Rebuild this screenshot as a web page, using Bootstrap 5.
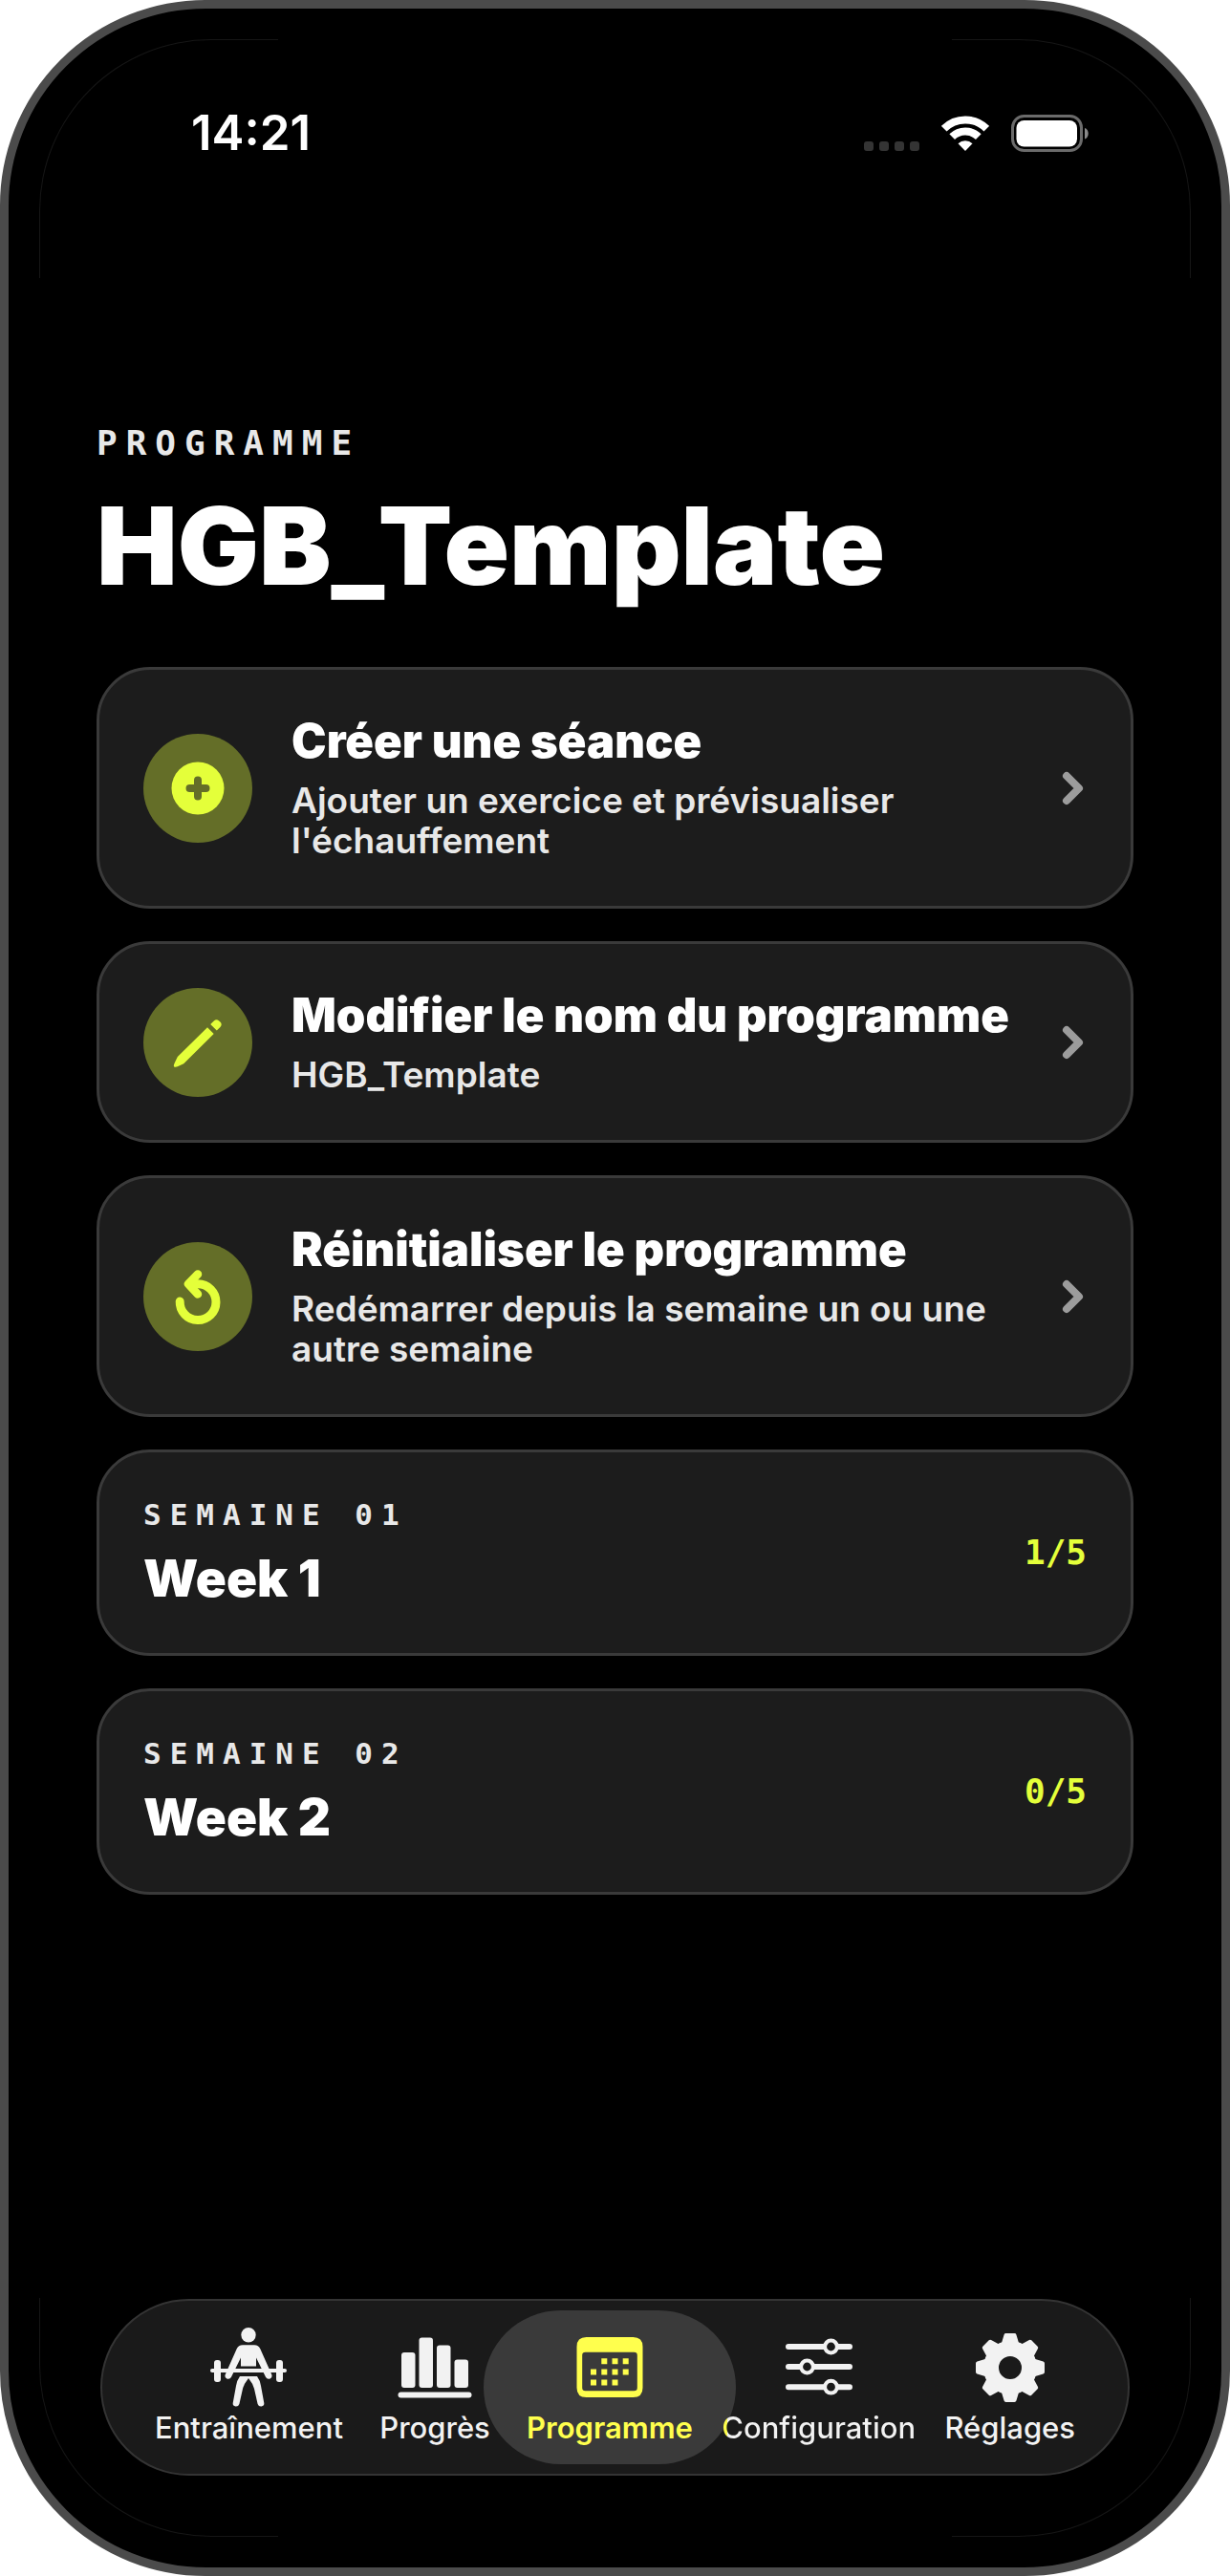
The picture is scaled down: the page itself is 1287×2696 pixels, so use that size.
<!DOCTYPE html>
<html lang="fr">
<head>
<meta charset="utf-8">
<meta name="viewport" content="width=device-width, initial-scale=1">
<title>Programme</title>
<link href="https://cdn.jsdelivr.net/npm/bootstrap@5.3.0/dist/css/bootstrap.min.css" rel="stylesheet">
<style>
  body { background: #fff; font-family: Inter, "Liberation Sans", sans-serif; }
  .device { min-height: 100vh; background: #000; color: #fff; border: 9px solid #4b4b4b; border-radius: 215px; padding: 100px 92px 96px; }
  .corner { position: absolute; width: 250px; height: 250px; border: 0 solid #161616; pointer-events: none; }
  .corner-tl { top: 32px; left: 32px; border-width: 1px 0 0 1px; border-top-left-radius: 180px; }
  .corner-tr { top: 32px; right: 32px; border-width: 1px 1px 0 0; border-top-right-radius: 180px; }
  .corner-bl { bottom: 32px; left: 32px; border-width: 0 0 1px 1px; border-bottom-left-radius: 180px; }
  .corner-br { bottom: 32px; right: 32px; border-width: 0 1px 1px 0; border-bottom-right-radius: 180px; }

  .status { padding: 0 46px 0 99px; margin-bottom: 274px; }
  .clock { font-size: 51px; line-height: 60px; font-weight: 600; }
  .status-icons { gap: 23px; padding-top: 11px; }

  .eyebrow { font-family: "DejaVu Sans Mono", monospace; font-weight: 700; letter-spacing: 9px; color: #e8e8e8; }
  .eyebrow-lg { font-size: 36px; line-height: 42px; }
  .eyebrow-sm { font-size: 31px; line-height: 36px; }
  .page-title { font-size: 113px; line-height: 136px; font-weight: 900; margin: 18px 0 59px; }

  .stack { gap: 34px; }
  .tile { background: #1c1c1c; border: 3px solid #3a3a3a; border-radius: 56px; padding: 45px 46px; color: #fff; }
  .tile-body { padding: 2px 0; }
  .tile-text { gap: 13px; margin-left: 41px; margin-right: 20px; }
  .tile-title { font-size: 49px; line-height: 56px; font-weight: 900; }
  .tile-sub { font-size: 37px; line-height: 42px; font-weight: 600; color: #e8e8e8; }
  .week-title { font-size: 53px; line-height: 62px; font-weight: 900; margin-top: 18px; }
  .count { font-family: "DejaVu Sans Mono", monospace; font-weight: 700; font-size: 36px; line-height: 42px; color: #e4ff3a; }

  .tabs { background: #1a1a1a; border: 2px solid #343434; border-radius: 96px; padding: 26px 55px 29px; margin: 0 4px; }
  .tab { color: #f2f2f2; font-size: 31px; line-height: 38px; font-weight: 500; }
  .tab-on { color: #ffff4d; font-weight: 600; }
  .tab-on::before { content: ""; position: absolute; inset: -16px -45px -19px; border-radius: 81px; background: #3a3a3a; }
  .tab > * { position: relative; z-index: 1; }
  .tab-tint { background: linear-gradient(90deg, #ffff4d 6px, #f2f2f2 6px); -webkit-background-clip: text; background-clip: text; color: transparent; }
</style>
</head>
<body>
<div class="device position-relative d-flex flex-column">
  <span class="corner corner-tl"></span><span class="corner corner-tr"></span>
  <span class="corner corner-bl"></span><span class="corner corner-br"></span>

  <div class="status d-flex justify-content-between align-items-start">
    <div class="clock">14:21</div>
    <div class="status-icons d-flex align-items-center">
      <svg width="58" height="40" viewBox="0 0 58 40" fill="#343434" aria-hidden="true"><rect y="28" width="10" height="10" rx="3"/><rect x="16" y="28" width="10" height="10" rx="3"/><rect x="32" y="28" width="10" height="10" rx="3"/><rect x="48" y="28" width="10" height="10" rx="3"/></svg>
      <svg width="50" height="40" viewBox="0 0 50 40" fill="none" stroke="#fff" stroke-width="8" aria-hidden="true"><path d="M2.7 14.7A31.500 31.500 0 0 1 47.300 14.700M11.200 23.200A19.500 19.500 0 0 1 38.800 23.200"/><path d="M25 38l-7.500-7.800a10.800 10.800 0 0 1 15 0z" fill="#fff" stroke="none"/></svg>
      <svg width="82" height="40" viewBox="0 0 82 40" aria-hidden="true"><rect x="1.500" y="1.500" width="72" height="36" rx="12" fill="none" stroke="#6b6b6b" stroke-width="3"/><rect x="5.500" y="6" width="63.500" height="27.500" rx="8" fill="#fff"/><path d="M77 14c5 1.500 5 10 0 11.500z" fill="#8a8a8a"/></svg>
    </div>
  </div>

  <main>
    <div class="eyebrow eyebrow-lg">PROGRAMME</div>
    <h1 class="page-title">HGB_Template</h1>

    <div class="stack d-flex flex-column">
      <button type="button" class="tile d-flex align-items-center text-start w-100">
        <svg class="flex-shrink-0" width="114" height="114" viewBox="-57 -57 114 114" aria-hidden="true"><circle r="57" fill="#646e28"/><circle r="27.500" fill="#e4ff3a"/><path d="M-8.500 0h17M0-8.500v17" stroke="#646e28" stroke-width="8" stroke-linecap="round"/></svg>
        <span class="tile-body tile-text d-flex flex-column flex-grow-1">
          <span class="tile-title">Créer une séance</span>
          <span class="tile-sub">Ajouter un exercice et prévisualiser l'échauffement</span>
        </span>
        <svg class="flex-shrink-0" width="26" height="36" viewBox="0 0 26 36" fill="none" stroke="#9c9c9c" stroke-width="8" stroke-linecap="round" stroke-linejoin="round" aria-hidden="true"><path d="M5 5l13 13L5 31"/></svg>
      </button>

      <button type="button" class="tile d-flex align-items-center text-start w-100">
        <svg class="flex-shrink-0" width="114" height="114" viewBox="-57 -57 114 114" fill="#e4ff3a" aria-hidden="true"><circle r="57" fill="#646e28"/><path d="M10-15.700l6.700 6.700-31.500 31.200-6.500 3-2 .6q-2.500 0-1.700-2.600l.8-2 3-6.200zM13.200-19l3.600-3.600q2.700-2.500 5.400 0l1.200 1.200q2.600 2.700 0 5.400l-3.600 3.600z"/></svg>
        <span class="tile-body tile-text d-flex flex-column flex-grow-1">
          <span class="tile-title">Modifier le nom du programme</span>
          <span class="tile-sub">HGB_Template</span>
        </span>
        <svg class="flex-shrink-0" width="26" height="36" viewBox="0 0 26 36" fill="none" stroke="#9c9c9c" stroke-width="8" stroke-linecap="round" stroke-linejoin="round" aria-hidden="true"><path d="M5 5l13 13L5 31"/></svg>
      </button>

      <button type="button" class="tile d-flex align-items-center text-start w-100">
        <svg class="flex-shrink-0" width="114" height="114" viewBox="-57 -57 114 114" fill="none" stroke="#e4ff3a" stroke-width="9" stroke-linecap="round" stroke-linejoin="round" aria-hidden="true"><circle r="57" fill="#646e28" stroke="none"/><path d="M-18.800 5A18.900 18.900 0 1 0 0-13.200h-6"/><path d="M0-23.500L-10-13.200 0-2.500" stroke-width="8.500"/></svg>
        <span class="tile-body tile-text d-flex flex-column flex-grow-1">
          <span class="tile-title">Réinitialiser le programme</span>
          <span class="tile-sub">Redémarrer depuis la semaine un ou une autre semaine</span>
        </span>
        <svg class="flex-shrink-0" width="26" height="36" viewBox="0 0 26 36" fill="none" stroke="#9c9c9c" stroke-width="8" stroke-linecap="round" stroke-linejoin="round" aria-hidden="true"><path d="M5 5l13 13L5 31"/></svg>
      </button>

      <button type="button" class="tile d-flex align-items-center justify-content-between text-start w-100">
        <span class="tile-body d-flex flex-column">
          <span class="eyebrow eyebrow-sm">SEMAINE 01</span>
          <span class="week-title">Week 1</span>
        </span>
        <span class="count">1/5</span>
      </button>

      <button type="button" class="tile d-flex align-items-center justify-content-between text-start w-100">
        <span class="tile-body d-flex flex-column">
          <span class="eyebrow eyebrow-sm">SEMAINE 02</span>
          <span class="week-title">Week 2</span>
        </span>
        <span class="count">0/5</span>
      </button>
    </div>
  </main>

  <nav class="tabs d-flex justify-content-between mt-auto" aria-label="Navigation principale">
    <a href="#entrainement" class="tab me-2 position-relative d-flex flex-column align-items-center text-decoration-none">
      <svg width="88" height="88" viewBox="0 0 88 88" fill="#f2f2f2" aria-hidden="true"><circle cx="44" cy="9.700" r="7.700"/><path d="M38 20.300h12q4.500 0 6.300 4L68.200 51q1.200 3.200-1.500 4.500-3.200 1.200-4.700-1.800L52 33.500V42.500H36V33.500L26 53.700q-1.500 3-4.700 1.800-2.700-1.300-1.500-4.500L31.700 24.300q1.800-4 6.300-4z"/><rect x="4" y="45" width="80" height="4" rx="2"/><rect x="8" y="36" width="7" height="23" rx="3"/><rect x="73" y="36" width="7" height="23" rx="3"/><path d="M35 53h18q3 4 4 10l3.300 18q.3 3-2.700 3.500-3 .3-4-2.500L50 66q-1.500-5.500-6-11-4.500 5.500-6 11l-3.600 16q-1 2.800-4 2.500-3-.5-2.700-3.500L31 63q1-6 4-10z"/></svg>
      <span>Entraînement</span>
    </a>
    <a href="#progres" class="tab me-2 position-relative d-flex flex-column align-items-center text-decoration-none">
      <svg width="88" height="88" viewBox="0 0 88 88" fill="#f2f2f2" aria-hidden="true"><rect x="9" y="28" width="14.500" height="37" rx="3"/><rect x="27.500" y="12.500" width="14.500" height="52.500" rx="3"/><rect x="46" y="20.500" width="14.500" height="44.500" rx="3"/><rect x="64.500" y="35.500" width="14.500" height="29.500" rx="3"/><rect x="5.500" y="69.500" width="77" height="6" rx="3"/></svg>
      <span>Progrès</span>
    </a>
    <a href="#programme" class="tab tab-on position-relative d-flex flex-column align-items-center text-decoration-none" aria-current="page">
      <svg width="88" height="88" viewBox="0 0 88 88" fill="#ffff4d" aria-hidden="true"><path fill-rule="evenodd" d="M19.500 12h49q10 0 10 10v43q0 10-10 10h-49q-10 0-10-10V22q0-10 10-10zM18.500 27.700q-3.300 0-3.300 3.300v34q0 3.300 3.300 3.300h51q3.300 0 3.300-3.300V31q0-3.300-3.300-3.300z"/><path d="M38.300 34.300v6M49.500 34.300v6M60.700 34.300v6M27 45.400v6M38.300 45.400v6M49.500 45.400v6M60.700 45.400v6M27 56.500v6M38.300 56.500v6M49.500 56.500v6" stroke="#ffff4d" stroke-width="6"/></svg>
      <span>Programme</span>
    </a>
    <a href="#configuration" class="tab position-relative d-flex flex-column align-items-center text-decoration-none">
      <svg width="88" height="88" viewBox="0 0 88 88" fill="#1a1a1a" stroke="#f2f2f2" stroke-linecap="round" aria-hidden="true"><path d="M12 22h64M12 43h64M12 64.200h64" stroke-width="6"/><g stroke-width="4"><circle cx="56.500" cy="22" r="6.400"/><circle cx="31.500" cy="43" r="6.400"/><circle cx="56.500" cy="64.200" r="6.400"/></g></svg>
      <span class="tab-tint">Configuration</span>
    </a>
    <a href="#reglages" class="tab position-relative d-flex flex-column align-items-center text-decoration-none">
      <svg width="88" height="88" viewBox="-44 -44 88 88" fill="#f2f2f2" aria-hidden="true"><circle r="20" fill="none" stroke="#f2f2f2" stroke-width="16"/><g stroke="#f2f2f2" stroke-width="4" stroke-linejoin="round"><path id="tooth" d="M-7.500-24L-4.500-34h9L7.500-24z"/><use href="#tooth" transform="rotate(45)"/><use href="#tooth" transform="rotate(90)"/><use href="#tooth" transform="rotate(135)"/><use href="#tooth" transform="rotate(180)"/><use href="#tooth" transform="rotate(225)"/><use href="#tooth" transform="rotate(270)"/><use href="#tooth" transform="rotate(315)"/></g></svg>
      <span>Réglages</span>
    </a>
  </nav>
</div>
<script src="https://cdn.jsdelivr.net/npm/bootstrap@5.3.0/dist/js/bootstrap.bundle.min.js"></script>
</body>
</html>
